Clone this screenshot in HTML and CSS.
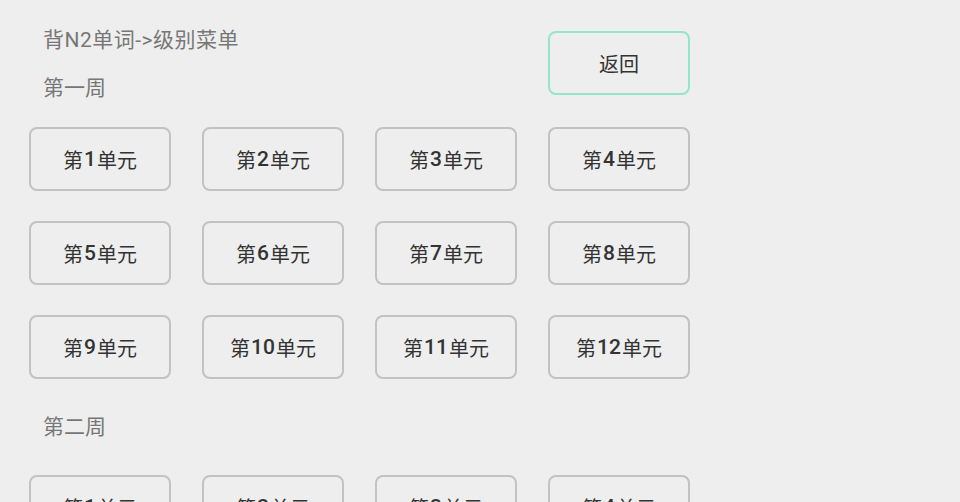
FILE: index.html
```html
<!DOCTYPE html>
<html lang="zh-CN">
<head>
    <meta charset="UTF-8">
    <meta name="viewport" content="width=device-width, initial-scale=1.0">
    <title>背N2单词</title>
    <link rel="stylesheet" href="styles.css">
</head>
<body>
    <div class="page">
        <div class="head">
            <div class="head-text">
                <p class="title">背N2单词-&gt;级别菜单</p>
                <p class="week">第一周</p>
            </div>
            <a href="javascript:void(0);" class="btn btn-back">返回</a>
        </div>
        <ul class="units">
            <li><a href="javascript:void(0);" class="btn">第<b>1</b>单元</a></li>
            <li><a href="javascript:void(0);" class="btn">第<b>2</b>单元</a></li>
            <li><a href="javascript:void(0);" class="btn">第<b>3</b>单元</a></li>
            <li><a href="javascript:void(0);" class="btn">第<b>4</b>单元</a></li>
            <li><a href="javascript:void(0);" class="btn">第<b>5</b>单元</a></li>
            <li><a href="javascript:void(0);" class="btn">第<b>6</b>单元</a></li>
            <li><a href="javascript:void(0);" class="btn">第<b>7</b>单元</a></li>
            <li><a href="javascript:void(0);" class="btn">第<b>8</b>单元</a></li>
            <li><a href="javascript:void(0);" class="btn">第<b>9</b>单元</a></li>
            <li><a href="javascript:void(0);" class="btn">第<b>10</b>单元</a></li>
            <li><a href="javascript:void(0);" class="btn">第<b>11</b>单元</a></li>
            <li><a href="javascript:void(0);" class="btn">第<b>12</b>单元</a></li>
        </ul>
        <p class="week week-2">第二周</p>
        <ul class="units">
            <li><a href="javascript:void(0);" class="btn">第<b>1</b>单元</a></li>
            <li><a href="javascript:void(0);" class="btn">第<b>2</b>单元</a></li>
            <li><a href="javascript:void(0);" class="btn">第<b>3</b>单元</a></li>
            <li><a href="javascript:void(0);" class="btn">第<b>4</b>单元</a></li>
        </ul>
    </div>
</body>
</html>
```

FILE: styles.css
```css
html, body{
    margin: 0;
    padding: 0;
    background-color: #eeeeee;
    height: 502px;
    overflow: hidden;
}
body{
    font-family: Roboto, "Noto Sans CJK SC", sans-serif;
}
p{
    margin: 0;
}
ul{
    list-style: none;
    padding-left: 0;
    margin: 0;
}
.page{
    padding: 30px 0 0 29px;
}
.head{
    display: grid;
    grid-template-columns: 488px 142px;
    column-gap: 31px;
}
.head-text{
    padding-left: 14px;
}
.title, .week{
    font-size: 21px;
    line-height: 20px;
    color: #777777;
}
.title{
    letter-spacing: 0.5px;
}
.week{
    margin-top: 28px;
}
.units{
    display: grid;
    grid-template-columns: repeat(4, 142px);
    column-gap: 31px;
    row-gap: 30px;
    margin-top: 29px;
}
.btn{
    box-sizing: border-box;
    display: flex;
    align-items: center;
    justify-content: center;
    width: 142px;
    height: 64px;
    border: 2px solid #c2c2c2;
    border-radius: 8px;
    color: #333333;
    font-size: 20px;
    text-decoration: none;
}
.btn b{
    font-size: 21px;
    font-weight: 500;
    padding: 0 1px;
}
.btn-back{
    margin-top: 1px;
    border-color: #94e6c8;
}
.week-2{
    margin: 38px 0 0 14px;
}
.week-2 + .units{
    margin-top: 38px;
}
```
